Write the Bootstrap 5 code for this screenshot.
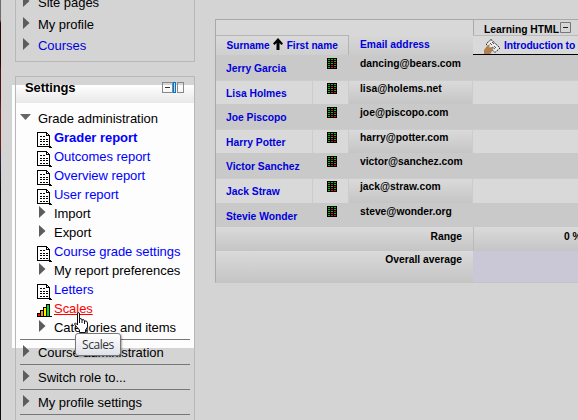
<!DOCTYPE html>
<html lang="en">
<head>
<meta charset="utf-8">
<title>Grader report</title>
<link href="https://cdn.jsdelivr.net/npm/bootstrap@5.3.0/dist/css/bootstrap.min.css" rel="stylesheet">
<style>
body{margin:0;background:#d4d4d4;font-family:"Liberation Sans",Arial,sans-serif;font-size:13px;color:#000}
.page{width:578px;height:420px}
a,a:hover{color:#00d;text-decoration:none}
.edge{width:1px;background:linear-gradient(#746a6a 0 20px,#2b0508 23px 65px,#521012 70px 98px,#6b2020 110px 145px,#30243c 160px,#120b0d 190px)}
.spot{left:12px;top:85px;width:182px;height:263px;background:#fdfdfd}
.side{width:180px;margin-left:14px;letter-spacing:-.04px}
.block{border:1px solid #b8b8b8;width:180px}
.nav-block{display:flow-root;height:62px;border-top:0;margin-bottom:14px}
.nav-block .item{height:21.7px;margin-left:7px}
.nav-block .ic{padding-top:2px}
.nav-block ul{margin-top:-7px}
.settings{height:350px}
.head{height:26px;padding:0 10px 3px 9px;background:linear-gradient(#d4d4d4 0 8px,#fefefe 8px,#e8e8e8)}
.head h2{font-size:13px;letter-spacing:-.1px;line-height:18px;padding-bottom:2px}
.item{height:19px;line-height:19px;white-space:nowrap}
.item svg{flex:none;display:block}
.lv1{padding-left:4px}
.lv2{padding-left:21px}
.ic{width:17px;flex:none;height:19px}
.nav-block .ic{width:15px}
.lv1 .ic{width:18px;padding-top:5px}
.top{height:25px;line-height:25px;border-top:1px solid #777;margin:0 4px;padding-left:2px}
.top .ic{width:16px;padding:5px 0 0 1px}
.settings a{color:#00f}
.settings a.hot{color:#f00;text-decoration:underline;text-underline-offset:1px}
.tip{left:75px;top:333px;width:46px;height:23px;border:1px solid #777;border-radius:3px;background:linear-gradient(#fff,#e0e2eb);font:12px/22px "Open Sans","Noto Sans",sans-serif;letter-spacing:-.45px;color:#333;text-align:center;box-shadow:1px 1px 2px #0005}
.cur{left:74px;top:312px;z-index:3}
.grades{margin:19px 0 0 20px;width:363px;height:264px;border:1px solid #a9a9a9;border-right:0;border-bottom-color:#c4c4c4;font-size:10.3px;font-weight:700;display:grid;grid-template-columns:97px 36px 124px 105px;grid-template-rows:15px 20px 25px 24px 25px 24px 25px 25px 24px 24px 31px;white-space:nowrap;flex:none}
.grades>div{overflow:hidden;line-height:14px}
.odd{background:#c9c9c9}
.even{background:#d9d9d9;border-top:1px solid #ccc;border-right:1px solid #ccc}
.even.mail,.grad{background:linear-gradient(#dadada,#c5c5c5)}
.who{padding:7px 0 0 10px}
.mail{padding:2px 0 0 11px}
.cell{padding:3px 0 0 14px}
.cell svg{display:block}
.even.who{padding-top:6px}.even.mail{padding-top:1px}.even.cell{padding-top:2px}
.even.free{border-right:0}
.surname{grid-column:span 2;border:1px solid #b4b4b4;border-width:1px 1px 0 0;padding:3px 0 0 10.500px;background:linear-gradient(#dadada,#cfcfcf);font-size:10.1px}
.activity{border-top:1px solid #bbb;border-bottom:1px solid #000;background:#d9d9d9;padding:3px 0 0 11px}
</style>
<script src="https://cdn.jsdelivr.net/npm/bootstrap@5.3.0/dist/js/bootstrap.bundle.min.js"></script>
</head>
<body>
<svg width="0" height="0" class="position-absolute">
<symbol id="rt" viewBox="0 0 7 12"><path fill="#5c5c5c" d="M0 0L6.500 6L0 12z"/></symbol>
<symbol id="doc" viewBox="0 0 15 16" shape-rendering="crispEdges"><path d="M0 0H10V1H11V2H12V3H13V14H14V15H15V16H12V15H0z"/><path fill="#fff" d="M1 1H9V4H12V14H1zM10 2H11V3H10z"/><path fill="none" stroke="#000" stroke-dasharray="2 1" d="M3 4.500H8M3 7.500H11M3 9.500H11M3 12.500H11"/></symbol>
<symbol id="grid" viewBox="0 0 10 11" shape-rendering="crispEdges"><path d="M0 0H10V11H0z"/><path fill="#1bb51b" d="M1 1h2v1h-2zM4 1h2v1h-2zM7 1h2v1h-2zM1 3h2v1h-2zM7 3h2v1h-2zM1 5h2v1h-2zM4 5h2v1h-2zM1 7h2v1h-2zM7 7h2v1h-2zM1 9h2v1h-2z"/><path fill="#c41c1c" d="M4 3h2v1h-2zM7 5h2v1h-2zM4 7h2v1h-2zM4 9h2v1h-2zM7 9h2v1h-2z"/></symbol>
</svg>
<div class="page position-relative overflow-hidden d-flex">
<div class="edge flex-shrink-0"></div>
<div class="spot position-absolute"></div>
<div class="side position-relative flex-shrink-0">
  <div class="block nav-block">
    <ul class="list-unstyled mb-0">
      <li class="item d-flex"><span class="ic"><svg width="7" height="12"><use href="#rt"/></svg></span>Site pages</li>
      <li class="item d-flex"><span class="ic"><svg width="7" height="12"><use href="#rt"/></svg></span>My profile</li>
      <li class="item d-flex"><span class="ic"><svg width="7" height="12"><use href="#rt"/></svg></span><a href="#">Courses</a></li>
    </ul>
  </div>
  <div class="block settings">
    <div class="head d-flex justify-content-between align-items-center">
      <h2 class="m-0 fw-bold">Settings</h2>
      <svg width="22" height="11" style="margin-top:-3px" shape-rendering="crispEdges" fill="none" stroke="#888"><path d="M.5 .5H10.500V10.500H.5z"/><path stroke="#333" d="M3 5.500H8"/><path stroke="#07c" fill="#aee0ff" d="M11.500 .5H13.500V10.500H11.500z"/><path d="M15.500 .5H21.500V10.500H15.500z"/></svg>
    </div>
    <ul class="list-unstyled mb-0 pt-1" id="tree"></ul>
  </div>
</div>
<div class="grades" id="grades"></div>
<svg class="cur position-absolute" width="15" height="22" viewBox="0 0 15 22"><path fill="#fff" stroke="#111" d="M3.500 13V2Q3.500 .5 4.500 .5T5.500 2V7Q7.500 5.500 8 8Q10 6.500 10.500 9Q13 8 13.500 11V15L11.500 18V20.500H5.500V18L1 13Q0 11 1.500 11z"/><path stroke="#111" d="M5.500 7V11M8 8V11M10.500 9V12"/></svg>
<div class="tip position-absolute">Scales</div>
</div>
<script>
const svg=(id,w,h)=>`<svg class="d-block" width="${w}" height="${h}"><use href="#${id}"/></svg>`;
const bars='<svg width="15" height="13" shape-rendering="crispEdges"><path d="M0 9H3V6H6V3H9V0H13V12H15V13H0z"/><path fill="#f00" d="M1 10H3V12H1z"/><path fill="#f90" d="M4 7H6V12H4z"/><path fill="#fe0" d="M7 4H9V12H7z"/><path fill="#0d2" d="M10 1H12V12H10z"/></svg>';
const down='<svg width="11" height="6"><path fill="#666" d="M0 0H11L5.500 6z"/></svg>';
const rows=[['b','Grader report'],['d','Outcomes report'],['d','Overview report'],['d','User report'],['r','Import'],['r','Export'],['d','Course grade settings'],['r','My report preferences'],['d','Letters'],['s','Scales'],['r','Categories and items']];
let t=`<li class="item lv1 d-flex" style="margin-top:2px"><span class="ic">${down}</span>Grade administration</li>`;
rows.forEach(([k,s])=>{
  const icon=k=='r'?`<div style="padding:2px 0 0 2px">${svg('rt',7,12)}</div>`:k=='s'?`<div style="padding-top:5px">${bars}</div>`:`<div class="pt-1">${svg('doc',15,16)}</div>`;
  const text=k=='r'?s:`<a href="#" class="${k=='b'?'fw-bold':k=='s'?'hot':''}">${s}</a>`;
  t+=`<li class="item lv2 d-flex"><span class="ic">${icon}</span>${text}</li>`;
});
['Course administration','Switch role to...','My profile settings'].forEach((s,i)=>{
  t+=`<li class="top d-flex" style="${i==0?'margin-top:2px':i==2?'height:26px;border-bottom:1px solid #777':''}"><span class="ic">${svg('rt',7,12)}</span>${s}</li>`;
});
document.getElementById('tree').innerHTML=t;

const people=[['Jerry Garcia','dancing@bears.com'],['Lisa Holmes','lisa@holems.net'],['Joe Piscopo','joe@piscopo.com'],['Harry Potter','harry@potter.com'],['Victor Sanchez','victor@sanchez.com'],['Jack Straw','jack@straw.com'],['Stevie Wonder','steve@wonder.org']];
let g=`<div style="grid-column:span 3;background:#d8d8d8"></div>
<div style="border-left:1px solid #aaa;background:#d6d6d6;padding:3px 0 0 10px" class="d-flex"><span>Learning HTML</span><svg style="margin:-1px 0 0 1px" width="11" height="11" fill="none" stroke="#777"><path d="M.5 .5H10.500V10.500H.5z"/><path stroke="#222" d="M3 5.500H8"/></svg></div>
<div class="surname d-flex"><a href="#">Surname</a><svg style="margin:-1px 3.500px 0" width="10" height="12"><path d="M5 0L10 5.500L8.500 7L6.500 5V12H3.500V5L1.500 7L0 5.500z"/></svg><a href="#">First name</a></div>
<div class="mail" style="background:linear-gradient(#d8d8d8,#cbcbcb);padding-top:3px"><a href="#">Email address</a></div>
<div class="activity d-flex"><svg class="flex-shrink-0" width="17" height="16"><path fill="#eee" stroke="#222" stroke-dasharray="2 1" d="M7 .5L16 9L11 13.500L2 5z"/><path stroke="#555" d="M6 4l2 2M8 3l2 2M10 7l2 2M8 8l3 2"/><path fill="#b08050" d="M0 15V11L3 7L6 5L5 9L8 8L9 10L7 14L6 15z"/></svg><a href="#" style="margin-left:3px;letter-spacing:-.1px">Introduction to HTML</a></div>`;
people.forEach(([n,m],i)=>{const c=i%2?'even':'odd';
  g+=`<div class="${c} who"><a href="#">${n}</a></div><div class="${c} cell">${svg('grid',10,11)}</div><div class="${c} mail">${m}</div><div class="${c} free"></div>`;});
g+=`<div class="grad text-end" style="grid-column:span 3;padding:3px 11px 0 0">Range</div><div class="grad" style="border-left:1px solid #bbb;padding:3px 0 0 90px">0 %</div>
<div class="grad text-end" style="grid-column:span 3;padding:2px 11px 0 0">Overall average</div><div style="background:#cac8d6"></div>`;
document.getElementById('grades').innerHTML=g;
</script>
</body>
</html>
